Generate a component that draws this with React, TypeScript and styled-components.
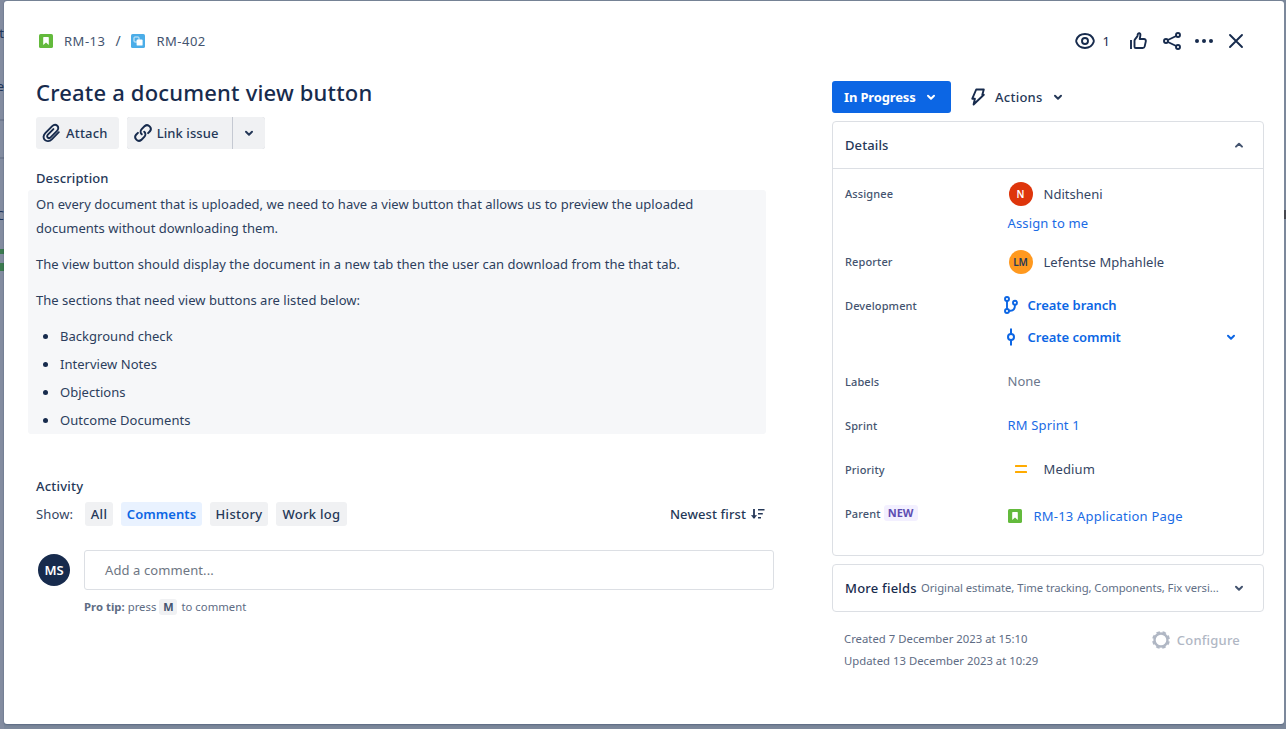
import React from 'react';
import styled, { createGlobalStyle } from 'styled-components';

const GlobalStyle = createGlobalStyle`
  * { box-sizing: border-box; }
  body {
    margin: 0;
    overflow: hidden;
    background: #7c889b;
    color: #172b4d;
    font: 400 13px/20px "Noto Sans", "Open Sans", sans-serif;
    letter-spacing: 0.03px;
  }
  p, h1, h2, ul { margin: 0; padding: 0; font: inherit; }
  button { border: 0; font: inherit; letter-spacing: inherit; color: inherit; background: none; padding: 0; }
  svg { display: block; flex: none; }
`;

const Screen = styled.div`
  display: grid;
  grid-template-columns: 4px 1280px 2px;
  width: 1286px;
  height: 729px;
  overflow: hidden;
`;

const Behind = styled.div`
  display: flex;
  flex-direction: column;
  background: #838ca0;
  overflow: hidden;
  color: #1d3459;
`;

const BehindText = styled.span<{ $top: number }>`
  display: flex;
  justify-content: flex-end;
  margin-top: ${(p) => p.$top}px;
  height: 18px;
  line-height: 18px;
  flex: none;
`;

const BehindBar = styled.span<{ $top: number; $height: number; $color: string }>`
  margin-top: ${(p) => p.$top}px;
  height: ${(p) => p.$height}px;
  background: ${(p) => p.$color};
  flex: none;
`;

const ScrollMark = styled.span`
  margin-top: 210px;
  height: 9px;
  background: #46474f;
`;

const BehindRight = styled(Behind)`
  background: #7c889b;
`;

const Modal = styled.main`
  margin-top: 1px;
  height: 723px;
  border-radius: 3px;
  background: #fff;
  box-shadow: 0 0 1px rgba(9, 30, 66, 0.35), 0 1px 2px rgba(9, 30, 66, 0.25);
`;

const Header = styled.header`
  display: flex;
  align-items: center;
  justify-content: space-between;
  height: 80px;
  padding: 0 36px 0 35px;
`;

const Breadcrumbs = styled.nav`
  display: flex;
  align-items: center;
  color: #44546f;
  letter-spacing: 0.5px;
`;

const Crumb = styled.a`
  display: flex;
  align-items: center;
  gap: 11px;
`;

const Slash = styled.span`
  width: 26px;
  padding-left: 10px;
  font-size: 14px;
`;

const HeaderActions = styled.div`
  display: flex;
  align-items: center;
  gap: 8px;
`;

const Watch = styled.button`
  display: flex;
  align-items: center;
  gap: 6px;
  margin-right: 8px;
  color: #172b4d;
`;

const ThumbSlot = styled.span`
  margin-right: 2px;
`;

const Body = styled.div`
  display: flex;
  justify-content: space-between;
  padding: 0 20px 0 32px;
`;

const MainColumn = styled.section`
  display: flex;
  flex-direction: column;
  width: 738px;
`;

const Title = styled.h1`
  height: 24px;
  line-height: 22px;
  font-size: 22px;
  font-weight: 500;
  letter-spacing: 0.19px;
`;

const Toolbar = styled.div`
  display: flex;
  gap: 8px;
  margin-top: 12px;
`;

const ToolButton = styled.button`
  display: flex;
  align-items: center;
  gap: 5px;
  height: 32px;
  padding: 0 11px 0 6px;
  border-radius: 3px;
  background: #f0f1f3;
  font-weight: 500;
  letter-spacing: 0.2px;
  color: #253858;
`;

const SplitButton = styled.div`
  display: flex;
  gap: 1px;
  background: #c5c9d2;
  border-radius: 3px;
  overflow: hidden;
`;

const LinkButton = styled(ToolButton)`
  width: 105px;
  gap: 4px;
  border-radius: 0;
  letter-spacing: 0.08px;
`;

const DropButton = styled(ToolButton)`
  width: 32px;
  padding: 0;
  justify-content: center;
  border-radius: 0;
`;

const SectionTitle = styled.h2`
  font-weight: 500;
  letter-spacing: 0.12px;
  color: #253858;
`;

const DescriptionTitle = styled(SectionTitle)`
  margin-top: 19px;
`;

const ActivityTitle = styled(SectionTitle)`
  margin-top: 42px;
  letter-spacing: 0.2px;
`;

const Description = styled.div`
  display: flex;
  flex-direction: column;
  gap: 12px;
  width: 738px;
  height: 244px;
  margin: 2px 0 0 -8px;
  padding: 2px 8px;
  border-radius: 3px;
  background: #f6f7f9;
  line-height: 24px;
  color: #2c3e5d;
`;

const Bullets = styled.ul`
  display: flex;
  flex-direction: column;
  gap: 4px;
  list-style: none;
`;

const Bullet = styled.li`
  display: flex;
  align-items: center;
  gap: 12px;
  padding-left: 7px;
  &::before {
    content: '';
    width: 5px;
    height: 5px;
    border-radius: 50%;
    background: #172b4d;
  }
`;

const FilterRow = styled.div`
  display: flex;
  align-items: center;
  height: 24px;
  margin-top: 6px;
`;

const ShowLabel = styled.span`
  width: 49px;
  color: #344563;
  letter-spacing: 0.15px;
`;

const Chips = styled.div`
  display: flex;
  gap: 8px;
  flex: 1;
`;

const Chip = styled.button<{ $width: number; $active?: boolean }>`
  width: ${(p) => p.$width}px;
  height: 24px;
  border-radius: 3px;
  background: ${(p) => (p.$active ? '#e9f2ff' : '#f0f1f3')};
  color: ${(p) => (p.$active ? '#0c66e4' : '#253858')};
  font-weight: ${(p) => (p.$active ? 600 : 500)};
  letter-spacing: ${(p) => (p.$active ? 0.05 : 0.28)}px;
`;

const SortButton = styled.button`
  display: flex;
  align-items: center;
  gap: 5px;
  padding-right: 9px;
  font-weight: 500;
  letter-spacing: 0.1px;
  color: #253858;
`;

const CommentRow = styled.div`
  display: flex;
  align-items: center;
  justify-content: space-between;
  margin-top: 24px;
  padding-left: 2px;
`;

const Avatar = styled.span<{ $size: number; $bg: string; $color: string; $font: number }>`
  display: grid;
  place-items: center;
  width: ${(p) => p.$size}px;
  height: ${(p) => p.$size}px;
  border-radius: 50%;
  background: ${(p) => p.$bg};
  color: ${(p) => p.$color};
  font-size: ${(p) => p.$font}px;
  font-weight: 600;
  letter-spacing: 0;
`;

const CommentBox = styled.div`
  width: 690px;
  height: 40px;
  padding-left: 20px;
  border: 1px solid #dcdfe4;
  border-radius: 3px;
  line-height: 38px;
  color: #6e7683;
  letter-spacing: 0.1px;
`;

const Tip = styled.p`
  display: flex;
  align-items: center;
  gap: 3px;
  height: 16px;
  margin: 9px 0 0 48px;
  font-size: 11.3px;
  color: #5e6c84;
  b { font-weight: 700; }
`;

const Key = styled.kbd`
  width: 18px;
  height: 16px;
  margin: 0 1px 0 0;
  border-radius: 3px;
  background: #f0f1f3;
  font: 700 11px/16px "Noto Sans", sans-serif;
  text-align: center;
  color: #44546f;
`;

const SideColumn = styled.aside`
  display: flex;
  flex-direction: column;
  gap: 8px;
  width: 432px;
`;

const StatusRow = styled.div`
  display: flex;
  align-items: center;
  gap: 19px;
`;

const StatusButton = styled.button`
  display: flex;
  align-items: center;
  justify-content: space-between;
  width: 119px;
  height: 32px;
  padding: 0 12px;
  border-radius: 3px;
  background: #0c66e4;
  color: #fff;
  font-weight: 700;
  letter-spacing: -0.15px;
`;

const ActionsButton = styled.button`
  display: flex;
  align-items: center;
  font-weight: 500;
  letter-spacing: 0.25px;
  color: #253858;
  svg:first-child { margin-right: 9px; }
  svg:last-child { margin-left: 7px; }
`;

const Panel = styled.section`
  border: 1px solid #dcdfe4;
  border-radius: 4px;
`;

const DetailsPanel = styled(Panel)`
  height: 435px;
`;

const PanelHeader = styled.header`
  display: flex;
  align-items: center;
  justify-content: space-between;
  height: 47px;
  padding: 0 16px 0 12px;
  border-bottom: 1px solid #dcdfe4;
`;

const Fields = styled.div`
  display: flex;
  flex-direction: column;
  padding: 13px 12px 0;
`;

const Field = styled.div<{ $height: number }>`
  display: flex;
  align-items: flex-start;
  height: ${(p) => p.$height}px;
`;

const Label = styled.span<{ $drop?: number }>`
  display: flex;
  align-items: center;
  gap: 3px;
  width: 162.5px;
  height: 24px;
  margin-top: ${(p) => p.$drop ?? 0}px;
  font-size: 11px;
  font-weight: 500;
  letter-spacing: 0.12px;
  color: #44546f;
`;

const Values = styled.div<{ $gap?: number }>`
  display: flex;
  flex-direction: column;
  gap: ${(p) => p.$gap ?? 0}px;
  flex: 1;
`;

const Value = styled.div<{ $muted?: boolean }>`
  display: flex;
  align-items: center;
  height: 24px;
  color: ${(p) => (p.$muted ? '#6b778c' : '#344563')};
  letter-spacing: 0.03px;
`;

const Person = styled(Value)`
  gap: 11px;
  padding-left: 1px;
`;

const LinkValue = styled(Value)`
  color: #1a6be5;
  letter-spacing: 0.15px;
`;

const PriorityValue = styled(Value)`
  gap: 17px;
  padding-left: 7px;
  letter-spacing: 0.15px;
`;

const ParentValue = styled(LinkValue)`
  gap: 12px;
  margin-top: 3px;
  letter-spacing: 0.21px;
`;

const DevAction = styled.button`
  display: flex;
  align-items: center;
  gap: 7px;
  height: 24px;
  margin-left: -7px;
  padding-right: 12px;
  font-weight: 600;
  color: #0c66e4;
  letter-spacing: -0.02px;
  svg:nth-of-type(2) { margin-left: auto; }
`;

const NewBadge = styled.span`
  width: 34px;
  height: 16px;
  margin-top: -2px;
  border-radius: 3px;
  background: #f3f0ff;
  font-size: 11px;
  font-weight: 700;
  line-height: 16px;
  letter-spacing: -0.1px;
  text-align: center;
  color: #5e4db2;
`;

const MorePanel = styled(Panel)`
  display: flex;
  align-items: center;
  height: 48px;
  padding: 0 16px 0 12px;
`;

const MoreTitle = styled.h2`
  width: 76px;
  font-weight: 500;
  letter-spacing: 0.22px;
`;

const MoreHint = styled.span`
  flex: 1;
  white-space: nowrap;
  font-size: 11.3px;
  letter-spacing: -0.07px;
  color: #626f86;
`;

const Footer = styled.footer`
  display: flex;
  justify-content: space-between;
  padding: 8px 24px 0 12px;
`;

const Dates = styled.div`
  display: flex;
  flex-direction: column;
  line-height: 22px;
  font-size: 11.3px;
  letter-spacing: 0.02px;
  color: #5e6c84;
`;

const Configure = styled.button`
  display: flex;
  align-items: center;
  gap: 7px;
  height: 24px;
  font-weight: 500;
  letter-spacing: 0.2px;
  color: #b0b7c4;
`;

type ChevronProps = { color?: string; up?: boolean };

const Chevron = ({ color = '#253858', up = false }: ChevronProps) => (
  <svg width="16" height="16" viewBox="0 0 16 16" fill="none" stroke={color} strokeWidth="2" strokeLinecap="round" strokeLinejoin="round">
    <path d={up ? 'M5 9.600 8 6.700l3 2.900' : 'M5 6.800 8 9.700l3-2.900'} />
  </svg>
);

const StoryIcon = () => (
  <svg width="14" height="14" viewBox="0 0 14 14">
    <rect width="14" height="14" rx="1.6" fill="#63ba3c" />
    <path d="M4.200 3.600c0-.4.3-.6.6-.6h4.400c.3 0 .6.2.6.6V11L7 8.400 4.200 11z" fill="#fff" />
  </svg>
);

const SubtaskIcon = () => (
  <svg width="14" height="14" viewBox="0 0 14 14">
    <rect width="14" height="14" rx="1.6" fill="#4bade8" />
    <rect x="3" y="3" width="5" height="5" rx="0.8" fill="none" stroke="#fff" strokeOpacity="0.8" strokeWidth="1" />
    <rect x="5.6" y="5.6" width="6" height="6" rx="0.9" fill="#fff" />
  </svg>
);

const EyeIcon = () => (
  <svg width="24" height="24" viewBox="0 0 24 24" fill="none" stroke="#172b4d" strokeWidth="1.9">
    <path d="M12 5c4.300 0 7.300 2.300 8.600 5.800.3.8.3 1.600 0 2.400C19.300 16.700 16.300 19 12 19s-7.300-2.300-8.600-5.800a3.400 3.400 0 0 1 0-2.400C4.700 7.300 7.700 5 12 5z" />
    <circle cx="12" cy="12" r="3" />
  </svg>
);

const ThumbIcon = () => (
  <svg width="24" height="24" viewBox="0 0 24 24" fill="none" stroke="#172b4d" strokeWidth="1.9" strokeLinejoin="round">
    <path d="M5 11v9" />
    <path d="M8.500 17.700v-5.900c0-.5.2-1 .5-1.400l2.100-2.700c.2-.3.300-.6.400-1l.2-1.200c.2-1 .9-1.500 1.600-1.300.9.300 1.300 1.300 1 2.700L13.700 10h4.200c1.300 0 2.200 1.100 1.900 2.400l-1.100 5c-.2.900-1 1.600-2 1.600h-6.900c-.8 0-1.300-.5-1.300-1.300z" />
  </svg>
);

const ShareIcon = () => (
  <svg width="24" height="24" viewBox="0 0 24 24" fill="none" stroke="#172b4d" strokeWidth="1.9">
    <circle cx="6" cy="12" r="2" />
    <circle cx="18" cy="6" r="2" />
    <circle cx="18" cy="18" r="2" />
    <path d="M7.900 11 16.200 7M7.900 13l8.300 4" />
  </svg>
);

const MoreIcon = () => (
  <svg width="24" height="24" viewBox="0 0 24 24" fill="#172b4d">
    <circle cx="5" cy="12" r="2" />
    <circle cx="12" cy="12" r="2" />
    <circle cx="19" cy="12" r="2" />
  </svg>
);

const CloseIcon = () => (
  <svg width="24" height="24" viewBox="0 0 24 24" fill="none" stroke="#172b4d" strokeWidth="1.9" strokeLinecap="round">
    <path d="m6 6 12 12M18 6 6 18" />
  </svg>
);

const AttachIcon = () => (
  <svg width="19" height="20" viewBox="0 0 19 20" fill="none" stroke="#172b4d" strokeWidth="1.900" strokeLinecap="round" strokeLinejoin="round">
    <path d="m16.800 9.200-7 7.100c-2.200 2.200-5.200 2.400-7 .6s-1.600-4.600.5-6.700l6.900-7c1.500-1.500 3.700-1.700 5.100-.4s1.200 3.500-.3 5l-6.400 6.500c-.9.900-2.100 1-2.900.2s-.7-1.900.2-2.800l5.500-5.600" />
  </svg>
);

const LinkIcon = () => (
  <svg width="20" height="20" viewBox="0 0 20 20" fill="none" stroke="#172b4d" strokeWidth="2" strokeLinecap="round">
    <path d="M8.700 11.300a3.700 3.700 0 0 1 0-5.200l3-3a3.700 3.700 0 0 1 5.200 5.200l-1.800 1.800" />
    <path d="M11.300 8.700a3.700 3.700 0 0 1 0 5.200l-3 3a3.700 3.700 0 0 1-5.200-5.200l1.800-1.800" />
  </svg>
);

const SortIcon = () => (
  <svg width="14" height="12" viewBox="0 0 14 12" fill="none" stroke="#253858">
    <path d="M3 1v9" strokeWidth="1.800" />
    <path d="M.5 7.500 3 10.500l2.500-3z" fill="#253858" strokeWidth="0.600" />
    <path d="M7 1.800h6.500M7 5.800h4.800M7 9.800h3" strokeWidth="1.600" />
  </svg>
);

const BoltIcon = () => (
  <svg width="16" height="18" viewBox="0 0 16 18" fill="none" stroke="#172b4d" strokeWidth="1.900" strokeLinejoin="round">
    <path d="M6.200 1.500h7.600l-1.500 5.300h1.500L3.600 16.500l1.300-5.800H2.300z" />
  </svg>
);

const BranchIcon = () => (
  <svg width="20" height="20" viewBox="0 0 20 20" fill="none" stroke="#0c66e4" strokeWidth="1.900">
    <circle cx="6" cy="4" r="2" />
    <circle cx="6" cy="16" r="2" />
    <circle cx="14" cy="7.800" r="2" />
    <path d="M6 6v8M8 15.800h1.500c2.800 0 4.500-1.800 4.500-6" />
  </svg>
);

const CommitIcon = () => (
  <svg width="20" height="20" viewBox="0 0 20 20" fill="none" stroke="#0c66e4" strokeWidth="2">
    <circle cx="10" cy="10" r="3" />
    <path d="M10 1.500V7M10 13v5.500" />
  </svg>
);

const MediumIcon = () => (
  <svg width="12" height="10" viewBox="0 0 12 10" fill="#ffab00">
    <rect y="1" width="12" height="2" rx="0.500" />
    <rect y="7" width="12" height="2" rx="0.500" />
  </svg>
);

const GearIcon = () => (
  <svg width="18" height="18" viewBox="0 0 18 18" fill="none" stroke="#b0b7c4">
    <circle cx="9" cy="9" r="6.500" strokeWidth="2.400" />
    <circle cx="9" cy="9" r="8" strokeWidth="1.800" strokeDasharray="3.600 2.683" transform="rotate(9.600 9 9)" />
  </svg>
);

const listed = ['Background check', 'Interview Notes', 'Objections', 'Outcome Documents'];

export default function App() {
  return (
    <>
      <GlobalStyle />
      <Screen>
        <Behind>
          <BehindText $top={24}>ct</BehindText>
          <BehindText $top={35}>e</BehindText>
          <BehindBar $top={24} $height={2} $color="#717b90" />
          <BehindBar $top={36} $height={2} $color="#717b90" />
          <BehindText $top={47}>C</BehindText>
          <BehindBar $top={25} $height={5} $color="#3b7a4f" />
          <BehindBar $top={9} $height={8} $color="#3b7a4f" />
        </Behind>
        <Modal>
          <Header>
            <Breadcrumbs>
              <Crumb><StoryIcon /> RM-13</Crumb>
              <Slash>/</Slash>
              <Crumb><SubtaskIcon /> RM-402</Crumb>
            </Breadcrumbs>
            <HeaderActions>
              <Watch><EyeIcon />1</Watch>
              <ThumbSlot><ThumbIcon /></ThumbSlot>
              <ShareIcon />
              <MoreIcon />
              <CloseIcon />
            </HeaderActions>
          </Header>
          <Body>
            <MainColumn>
              <Title>Create a document view button</Title>
              <Toolbar>
                <ToolButton><AttachIcon />Attach</ToolButton>
                <SplitButton>
                  <LinkButton><LinkIcon />Link issue</LinkButton>
                  <DropButton><Chevron /></DropButton>
                </SplitButton>
              </Toolbar>
              <DescriptionTitle>Description</DescriptionTitle>
              <Description>
                <p>
                  On every document that is uploaded, we need to have a view button that allows us to preview the uploaded
                  <br />
                  documents without downloading them.
                </p>
                <p>The view button should display the document in a new tab then the user can download from the that tab.</p>
                <p>The sections that need view buttons are listed below:</p>
                <Bullets>
                  {listed.map((item) => <Bullet key={item}>{item}</Bullet>)}
                </Bullets>
              </Description>
              <ActivityTitle>Activity</ActivityTitle>
              <FilterRow>
                <ShowLabel>Show:</ShowLabel>
                <Chips>
                  <Chip $width={28}>All</Chip>
                  <Chip $width={81} $active>Comments</Chip>
                  <Chip $width={58}>History</Chip>
                  <Chip $width={71}>Work log</Chip>
                </Chips>
                <SortButton>Newest first<SortIcon /></SortButton>
              </FilterRow>
              <CommentRow>
                <Avatar $size={32} $bg="#172b4d" $color="#fff" $font={13}>MS</Avatar>
                <CommentBox>Add a comment...</CommentBox>
              </CommentRow>
              <Tip><b>Pro tip:</b> press <Key>M</Key> to comment</Tip>
            </MainColumn>
            <SideColumn>
              <StatusRow>
                <StatusButton>In Progress<Chevron color="#fff" /></StatusButton>
                <ActionsButton><BoltIcon />Actions<Chevron /></ActionsButton>
              </StatusRow>
              <DetailsPanel>
                <PanelHeader>
                  <SectionTitle>Details</SectionTitle>
                  <Chevron up color="#44546f" />
                </PanelHeader>
                <Fields>
                  <Field $height={68}>
                    <Label>Assignee</Label>
                    <Values $gap={5}>
                      <Person><Avatar $size={24} $bg="#de350b" $color="#fff" $font={10}>N</Avatar>Nditsheni</Person>
                      <LinkValue>Assign to me</LinkValue>
                    </Values>
                  </Field>
                  <Field $height={43}>
                    <Label>Reporter</Label>
                    <Values>
                      <Person><Avatar $size={24} $bg="#ff991f" $color="#253858" $font={10}>LM</Avatar>Lefentse Mphahlele</Person>
                    </Values>
                  </Field>
                  <Field $height={76}>
                    <Label $drop={1}>Development</Label>
                    <Values $gap={8}>
                      <DevAction><BranchIcon />Create branch</DevAction>
                      <DevAction><CommitIcon />Create commit<Chevron color="#0c66e4" /></DevAction>
                    </Values>
                  </Field>
                  <Field $height={44}>
                    <Label $drop={1}>Labels</Label>
                    <Value $muted>None</Value>
                  </Field>
                  <Field $height={44}>
                    <Label $drop={1}>Sprint</Label>
                    <LinkValue>RM Sprint 1</LinkValue>
                  </Field>
                  <Field $height={44}>
                    <Label $drop={1}>Priority</Label>
                    <PriorityValue><MediumIcon />Medium</PriorityValue>
                  </Field>
                  <Field $height={44}>
                    <Label $drop={1}>Parent<NewBadge>NEW</NewBadge></Label>
                    <ParentValue><StoryIcon />RM-13 Application Page</ParentValue>
                  </Field>
                </Fields>
              </DetailsPanel>
              <MorePanel>
                <MoreTitle>More fields</MoreTitle>
                <MoreHint>Original estimate, Time tracking, Components, Fix versi...</MoreHint>
                <Chevron color="#44546f" />
              </MorePanel>
              <Footer>
                <Dates>
                  <span>Created 7 December 2023 at 15:10</span>
                  <span>Updated 13 December 2023 at 10:29</span>
                </Dates>
                <Configure><GearIcon />Configure</Configure>
              </Footer>
            </SideColumn>
          </Body>
        </Modal>
        <BehindRight><ScrollMark /></BehindRight>
      </Screen>
    </>
  );
}
